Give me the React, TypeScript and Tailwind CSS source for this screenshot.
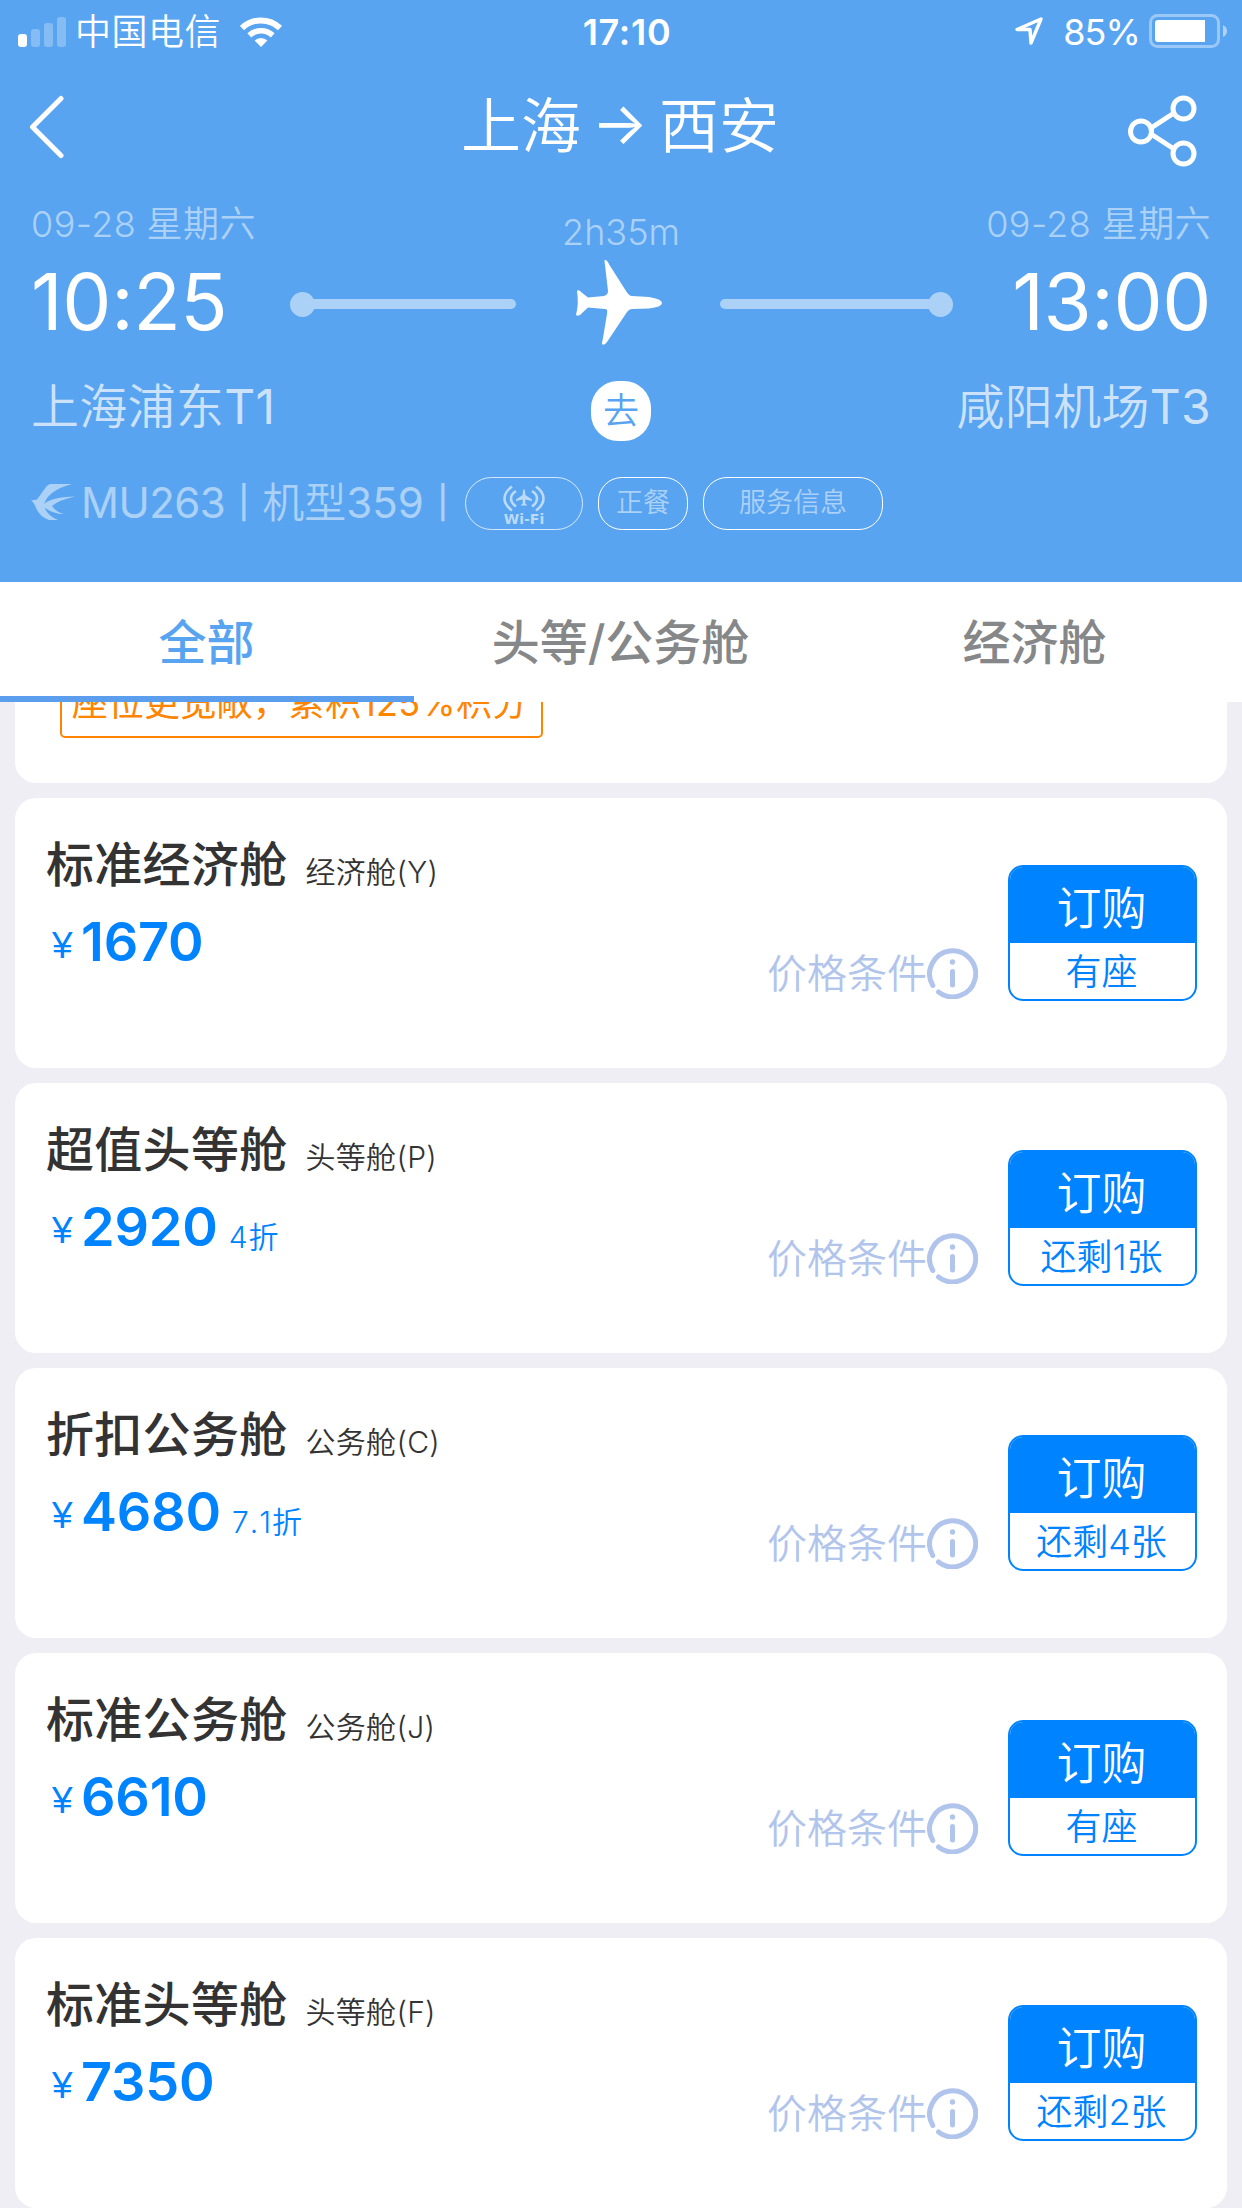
import { clsx } from "clsx";

type Fare = {
  name: string;
  cabin: string;
  price: number;
  discount?: string;
  stock: string;
};

const TABS = ["全部", "头等/公务舱", "经济舱"];

const FARES: Fare[] = [
  { name: "标准经济舱", cabin: "经济舱(Y)", price: 1670, stock: "有座" },
  { name: "超值头等舱", cabin: "头等舱(P)", price: 2920, discount: "4折", stock: "还剩1张" },
  { name: "折扣公务舱", cabin: "公务舱(C)", price: 4680, discount: "7.1折", stock: "还剩4张" },
  { name: "标准公务舱", cabin: "公务舱(J)", price: 6610, stock: "有座" },
  { name: "标准头等舱", cabin: "头等舱(F)", price: 7350, stock: "还剩2张" },
];

function StatusBar() {
  return (
    <div className="grid h-[62px] grid-cols-3 items-center pt-0.5 text-[36px] leading-[60px] font-[350]">
      <div className="flex items-center pl-[18px]">
        <svg width="48" height="30" viewBox="0 0 48 30" fill="#fff">
          <rect x="0" y="17" width="9" height="13" rx="3" />
          <g opacity="0.27">
            <rect x="13" y="12" width="9" height="18" rx="3" />
            <rect x="26" y="6" width="9" height="24" rx="3" />
            <rect x="39" y="0" width="9" height="30" rx="3" />
          </g>
        </svg>
        <span className="ml-[9px] tracking-[0.5px]">中国电信</span>
        <svg className="ml-[19px]" width="42" height="30" viewBox="0 0 42 30" fill="none">
          <path d="M2 11 A27.5 27.5 0 0 1 40 11" stroke="#fff" strokeWidth="6" />
          <path d="M9.3 18.4 A17 17 0 0 1 32.7 18.4" stroke="#fff" strokeWidth="5.6" />
          <path d="M21 30 L14.6 23.6 A9.2 9.2 0 0 1 27.4 23.6 Z" fill="#fff" />
        </svg>
      </div>
      <div className="pl-3 text-center text-[36px] font-semibold tracking-[0.7px]">17:10</div>
      <div className="flex items-center justify-end pr-[15px]">
        <svg className="mb-0.5" width="28" height="28" viewBox="0 0 28 28" fill="none">
          <path
            d="M2 12.500 L26 2 L16 26 L15 12.500 Z"
            stroke="#fff"
            strokeWidth="3.4"
            strokeLinejoin="round"
          />
        </svg>
        <span className="ml-5 font-normal tracking-[-0.9px]">85%</span>
        <svg className="mb-0.5 ml-[9px]" width="78" height="34" viewBox="0 0 78 34">
          <rect x="1.5" y="1.5" width="68" height="31" rx="7" fill="none" stroke="#fff" strokeOpacity="0.4" strokeWidth="3" />
          <path d="M9 6 H56 V28 H9 Q6 28 6 25 V9 Q6 6 9 6 Z" fill="#fff" />
          <path d="M74 11 Q78 13 78 17 Q78 21 74 23 Z" fill="#fff" fillOpacity="0.5" />
        </svg>
      </div>
    </div>
  );
}

function TitleBar() {
  return (
    <div className="flex h-[132px] items-center justify-between pr-[45px] pl-[29px]">
      <svg className="mb-0.5" width="80" height="64" viewBox="0 0 80 64" fill="none">
        <path
          d="M32 3.5 L3.5 32 L32 60.5"
          stroke="#fff"
          strokeWidth="5"
          strokeLinecap="round"
          strokeLinejoin="round"
        />
      </svg>
      <h1 className="flex items-center pb-[5px] pl-[4px] text-[60px] leading-[72px] font-[350]">
        上海
        <span className="flex w-[78px] justify-center pb-1.5 text-[59px] font-normal">→</span>
        西安
      </h1>
      <svg className="mt-[5px]" width="70" height="72" viewBox="0 0 70 72" fill="none" stroke="#fff" strokeWidth="5">
        <circle cx="14" cy="36.5" r="10.5" />
        <circle cx="56.5" cy="13.5" r="10.5" />
        <circle cx="56.5" cy="58.5" r="10.5" />
        <path d="M24 33 L47 18 M24 39 L47 54" />
      </svg>
    </div>
  );
}

function Track({ flip }: { flip?: boolean }) {
  return (
    <div className={clsx("flex items-center", flip && "flex-row-reverse")}>
      <i className="size-[25px] rounded-full bg-[#acd1f7]" />
      <i
        className={clsx(
          "h-[10px] bg-[#acd1f7]",
          flip ? "-mr-0.5 w-[210px] rounded-l-full" : "-ml-0.5 w-[203px] rounded-r-full",
        )}
      />
    </div>
  );
}

function Plane() {
  return (
    <svg className="mr-[58px] mb-[2px] ml-[60px]" width="86" height="86" viewBox="0 0 86 86" fill="#fff">
      <path d="M29 0 C31 0 32 2 33.500 5 L50 31 Q53 36 56 36 L73 37 Q86 39 86 43 Q86 47 73 48.500 L56 49 Q53 49 51 52 L31 82 Q28 86 26 84 Q26 82 27 78 L31 54 Q32 49 29 49 L12 47.500 L4 55 Q1 56 0 55 Q3 44 1 31 Q3 29 5 32 L12 37.500 L28 36 Q32 35 32 31 L29 5 Q28 0 29 0 Z" />
    </svg>
  );
}

function Swallow() {
  return (
    <svg className="mb-0.5" width="44" height="37" viewBox="0 0 44 37" fill="#acd1f7">
      <path d="M0 16.500 L6 15.500 L15 3 Q17 0 20 0 L41 0 Q29 3 21 9 Q15 14 13 20 Q20 13 44 12.500 Q28 16 21 22 Q25 28 33 30 Q22 30 13.500 23.500 Q17 32 27 36 L18 36 Q9 33 5 24 Q3 18 0 16.500 Z" />
    </svg>
  );
}

function CabinWifi() {
  return (
    <div className="flex h-[53px] w-[118px] flex-col items-center rounded-full border border-white/75 pt-[7px] text-white/60">
      <svg width="42" height="27" viewBox="0 0 42 27" fill="none" stroke="currentColor" strokeWidth="2.6">
        <path d="M9 1.500 Q1.500 7 1.500 13.500 Q1.500 20 9 25.500 M13 6 Q8 9 8 13.500 Q8 18 13 21.500" />
        <path d="M33 1.500 Q40.500 7 40.500 13.500 Q40.500 20 33 25.500 M29 6 Q34 9 34 13.500 Q34 18 29 21.500" />
        <path
          d="M21 4 Q22.300 5 22.300 10 L29 14.500 V16 L22.300 14.500 V18.500 L24.500 20.500 H17.500 L19.700 18.500 V14.500 L13 16 V14.500 L19.700 10 Q19.700 5 21 4 Z"
          fill="currentColor"
          stroke="none"
        />
      </svg>
      <span className="font-['DejaVu_Sans'] text-[14px] leading-[14px] font-bold">Wi-Fi</span>
    </div>
  );
}

type StopProps = { date: string; weekday: string; time: string; airport: string; terminal: string; className?: string };

function Stop({ date, weekday, time, airport, terminal, className }: StopProps) {
  return (
    <div className={clsx("pt-[6px]", className)}>
      <p className="text-[36px] leading-[48px] font-[350] tracking-[0.4px] text-white/50">
        {date} {weekday}
      </p>
      <p className="pt-[10px] text-[78px] leading-[88px] tracking-[-0.4px]">{time}</p>
      <p className="pt-[25px] text-[48px] leading-[72px] font-[350] tracking-[0.3px] text-white/70">
        {airport}
        <span className="font-normal">{terminal}</span>
      </p>
    </div>
  );
}

function Header() {
  return (
    <header className="h-[582px] bg-[#59a4f0] text-white">
      <StatusBar />
      <TitleBar />
      <div className="grid h-[267px] grid-cols-[1fr_auto_1fr] px-[31px]">
        <Stop date="09-28" weekday="星期六" time="10:25" airport="上海浦东" terminal="T1" />
        <div className="flex flex-col items-center pt-[14px]">
          <p className="text-[36px] leading-[48px] font-[350] text-white/50">2h35m</p>
          <div className="mt-[3px] flex h-[90px] items-center">
            <Track />
            <Plane />
            <Track flip />
          </div>
          <span className="mt-[32px] flex size-[60px] items-center justify-center rounded-[27px] bg-white text-[36px] leading-none font-[350] text-[#59a4f0]">
            去
          </span>
        </div>
        <Stop className="text-right" date="09-28" weekday="星期六" time="13:00" airport="咸阳机场" terminal="T3" />
      </div>
      <div className="flex h-[84px] items-center pl-[31px] text-[42px] leading-[60px] font-[350]">
        <Swallow />
        <div className="ml-1.5 flex w-[384px] items-center whitespace-nowrap text-white/50">
          <span className="font-normal tracking-[-0.5px]">MU263</span>
          <span className="w-[37px] text-center text-[32px] font-medium">|</span>
          机型<span className="font-normal">359</span>
          <span className="w-[38px] text-center text-[32px] font-medium">|</span>
        </div>
        <CabinWifi />
        <span className="ml-[15px] flex h-[53px] w-[90px] items-center justify-center rounded-[24px] border border-white text-[27px] text-white/50">
          正餐
        </span>
        <span className="ml-[15px] flex h-[53px] w-[180px] items-center justify-center rounded-[24px] border border-white text-[27px] text-white/50">
          服务信息
        </span>
      </div>
    </header>
  );
}

function Tabs({ active }: { active: number }) {
  return (
    <nav className="grid h-[120px] grid-cols-3 bg-white text-[48px] font-medium">
      {TABS.map((tab, i) => (
        <button key={tab} className={clsx("flex flex-col", i === active ? "text-[#59a4f0]" : "text-[#868788]")}>
          <span className="h-[114px] w-full pr-px leading-[121px]">{tab}</span>
          {i === active && <i className="h-[6px] w-full bg-[#5b9eee]" />}
        </button>
      ))}
    </nav>
  );
}

function InfoIcon() {
  return (
    <svg width="51" height="51" viewBox="0 0 51 51" fill="none" stroke="#b1c4ec" strokeWidth="5" strokeLinecap="round">
      <path d="M5.800 37.500 A23 23 0 1 1 11.500 44" />
      <path d="M25.500 23.500 V37" />
      <circle cx="25.500" cy="14" r="2.700" fill="#b1c4ec" stroke="none" />
    </svg>
  );
}

function FareCard({ fare }: { fare: Fare }) {
  return (
    <article className="flex h-[270px] shrink-0 justify-between rounded-[21px] bg-white pr-[30px] pl-[31px]">
      <div className="pt-[33px]">
        <div className="flex h-[68px] leading-[68px] text-[#333]">
          <h2 className="text-[48px] font-medium tracking-[0.3px]">{fare.name}</h2>
          <span className="pt-[7px] pl-[18px] text-[30px] font-[350] tracking-[0.3px]">{fare.cabin}</span>
        </div>
        <div className="mt-[5px] flex h-[76px] leading-[76px] text-[#0083ff]">
          <span className="w-[35px] pt-1 pl-1.5 font-['Liberation_Sans'] text-[37px]">¥</span>
          <span className="text-[54px] font-semibold tracking-[-0.2px]">{fare.price}</span>
          {fare.discount && (
            <span className="pt-2.5 pl-[11px] text-[30px] font-[350] tracking-[1px] [font-kerning:none]">{fare.discount}</span>
          )}
        </div>
      </div>
      <div className="flex pt-[67px]">
        <div className="mt-[83px] mr-[30px] flex h-[51px] items-center text-[40px] leading-[50px] font-[350] text-[#b1c4ec]">
          价格条件
          <InfoIcon />
        </div>
        <button className="flex h-[136px] w-[189px] flex-col overflow-hidden rounded-[15px] border-2 border-[#0083ff] text-center font-[350]">
          <span className="h-[76px] w-full bg-[#0083ff] pr-0.5 text-[45px] leading-[84px] text-white">订购</span>
          <span className="w-full pr-0.5 text-[36px] leading-[58px] text-[#0083ff]">{fare.stock}</span>
        </button>
      </div>
    </article>
  );
}

export default function App() {
  return (
    <div className="flex h-[2208px] w-[1242px] flex-col overflow-hidden bg-[#efeef5] font-['Inter','Noto_Sans_CJK_SC',sans-serif]">
      <Header />
      <Tabs active={0} />
      <main className="flex min-h-0 flex-1 flex-col gap-[15px] overflow-hidden px-[15px]">
        {/* tail of the card scrolled under the tabs */}
        <article className="flex h-[81px] shrink-0 flex-col items-start justify-end overflow-hidden rounded-b-[21px] bg-white pb-[45px] pl-[45px]">
          <p className="h-[66px] w-[483px] shrink-0 rounded-[5px] border-2 border-[#ff8400] pr-[3px] text-center text-[36px] leading-[59px] tracking-[0.2px] text-[#ff8400]">
            座位更宽敞，累积125%积分
          </p>
        </article>
        {FARES.map((fare) => (
          <FareCard key={fare.cabin} fare={fare} />
        ))}
      </main>
    </div>
  );
}
